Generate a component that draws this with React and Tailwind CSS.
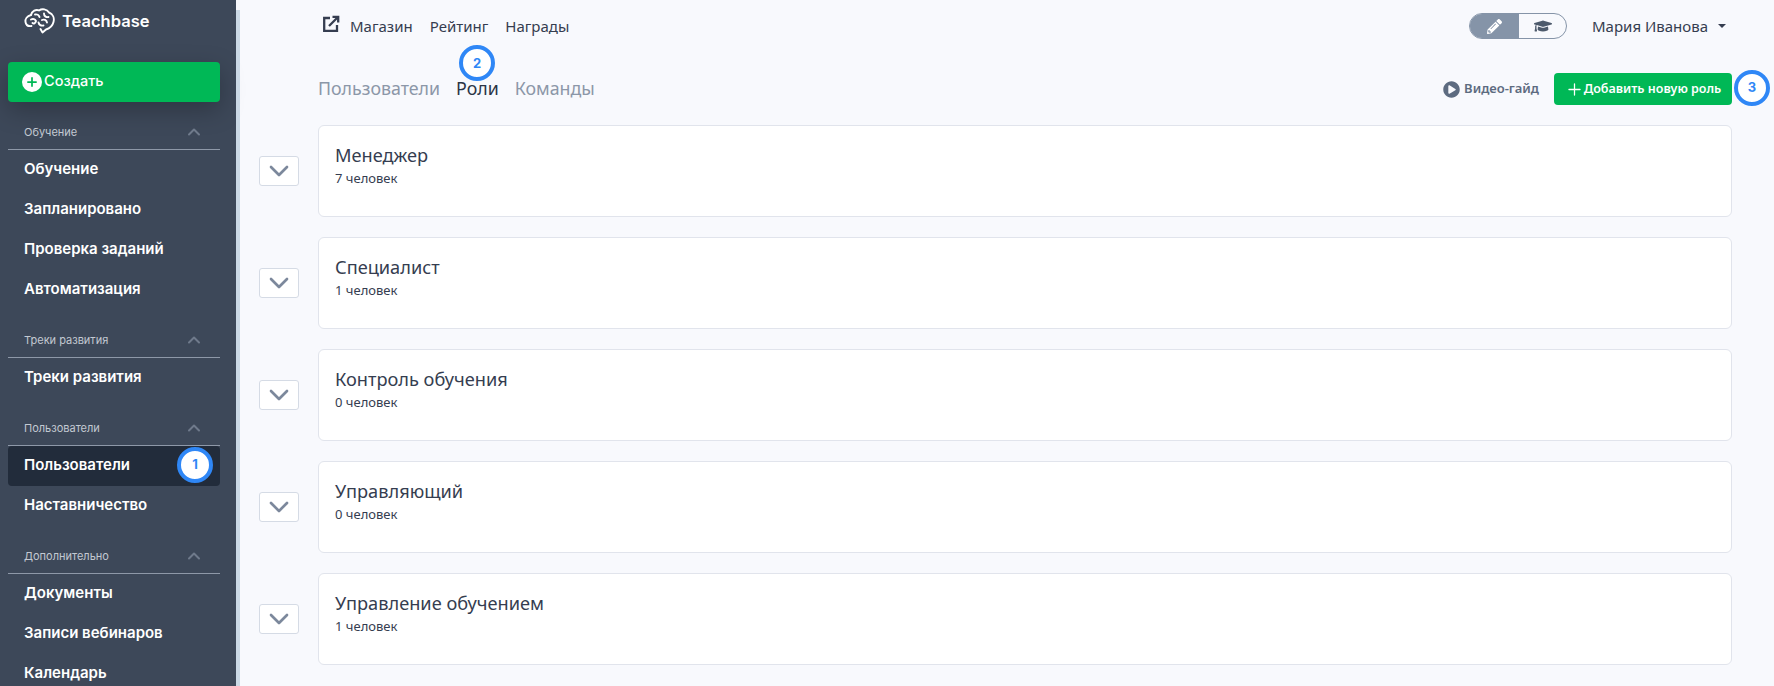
import { ChevronDown, ChevronUp, Plus } from "lucide-react";
import { FaGraduationCap, FaPencilAlt, FaPlayCircle } from "react-icons/fa";

const sections = [
  { title: "Обучение", items: ["Обучение", "Запланировано", "Проверка заданий", "Автоматизация"] },
  { title: "Треки развития", items: ["Треки развития"] },
  { title: "Пользователи", items: ["Пользователи", "Наставничество"] },
  { title: "Дополнительно", items: ["Документы", "Записи вебинаров", "Календарь"] },
];

const roles = [
  { name: "Менеджер", count: "7 человек" },
  { name: "Специалист", count: "1 человек" },
  { name: "Контроль обучения", count: "0 человек" },
  { name: "Управляющий", count: "0 человек" },
  { name: "Управление обучением", count: "1 человек" },
];

function Badge({ n, className }) {
  return (
    <span
      className={`absolute flex h-9 w-9 items-center justify-center rounded-full border-4 border-[#2f87f6] bg-white font-['Inter',sans-serif] text-[13px] font-bold text-[#2f87f6] ${className}`}
    >
      {n}
    </span>
  );
}

function BrainLogo() {
  return (
    <svg width="31" height="26" viewBox="0 0 31 26" fill="none" stroke="white" strokeWidth="1.9" strokeLinecap="round" strokeLinejoin="round">
      <path d="M7 7C8 3 12 1 15 2.500C18 .5 23 1 25 4.500C29 6 30.500 10 29.500 14C28.500 18 25.500 20.500 22 21.500L18.500 24.500L16.500 21" />
      <path d="M7 7C3 8 1 11 1.500 14C2 17 4.500 18.500 7.500 18" />
      <path d="M11 6.500C13 6 15 7 15.500 9" />
      <path d="M20 5.500C20 8 22 9.500 24.500 9" />
      <path d="M7 11.500C9 10.500 11 11 12 13C11.500 15.500 9.500 16 8.500 15" />
      <path d="M18 12C20 11 22.500 12 23 14.500" />
      <path d="M14.500 14.500C15 17 17 18 19.500 17.500" />
    </svg>
  );
}

function ExternalIcon() {
  return (
    <svg width="18" height="18" viewBox="0 0 18 18" fill="none" stroke="#353d50" strokeWidth="2.3" className="mr-[10px] -translate-y-[2px]">
      <path d="M8 3H2.200V15.800H15V10" />
      <path d="M7 11L16 2" />
      <path d="M10.500 1.800H16.200V7.500" />
    </svg>
  );
}

function Sidebar() {
  return (
    <aside className="flex h-full w-[236px] shrink-0 flex-col bg-[#3d4859] pl-2 pr-4 font-['Inter',sans-serif]">
      <div className="flex h-[62px] shrink-0 items-start pl-4 pt-2">
        <BrainLogo />
        <span className="ml-[7px] mt-[1px] text-[16.5px] font-semibold leading-6 text-white">Teachbase</span>
      </div>
      <button className="flex h-10 shrink-0 items-center rounded bg-[#00b856] pl-[14px] text-[14.5px] font-medium text-white shadow-[0_8px_24px_rgba(0,0,0,0.25)]">
        <span className="mr-[2px] flex h-5 w-5 items-center justify-center rounded-full bg-white">
          <Plus size={14} strokeWidth={3} className="text-[#00b856]" />
        </span>
        <span className="-translate-y-[1px]">Создать</span>
      </button>
      {sections.map((section) => (
        <div key={section.title} className="shrink-0">
          <div className="mt-[14px] flex h-[34px] items-start justify-between border-b border-[#8e98a8] pl-4 pr-[16px] pt-[6px]">
            <span className="text-[11px] leading-5 text-[#c3c9d2]">{section.title}</span>
            <ChevronUp size={20} strokeWidth={2.4} className="text-[#6f7a8b]" />
          </div>
          {section.items.map((item) => (
            <div
              key={item}
              className={`relative flex h-10 items-center rounded pb-[2px] pl-4 text-[15px] font-semibold text-white ${
                item === "Пользователи" ? "bg-[#222c3b]" : ""
              }`}
            >
              {item}
              {item === "Пользователи" && <Badge n="1" className="right-[7px] top-[1px]" />}
            </div>
          ))}
        </div>
      ))}
    </aside>
  );
}

function RoleRow({ role }) {
  return (
    <div className="flex items-center gap-[19px]">
      <button className="flex h-[30px] w-10 shrink-0 items-center justify-center rounded-[3px] border border-[#d5dbe5] bg-white">
        <ChevronDown size={32} strokeWidth={2} className="text-[#7c889c]" />
      </button>
      <div className="h-[92px] flex-1 rounded-md border border-[#e1e4ec] bg-white pl-4 pt-[15px] text-[#353d50]">
        <div className="text-[18.2px] leading-7">{role.name}</div>
        <div className="text-[13px] leading-[18px]">{role.count}</div>
      </div>
    </div>
  );
}

export default function App() {
  return (
    <div className="flex h-[686px] w-full overflow-hidden bg-[#f8f9fd] font-['Noto_Sans',sans-serif]">
      <Sidebar />
      <div className="mt-[10px] h-full w-1 shrink-0 bg-[#cbd9e6]" />
      <main className="flex min-w-0 flex-1 flex-col pl-[19px] pr-[42px]">
        <header className="flex h-[52px] shrink-0 items-center justify-between pl-[63px]">
          <nav className="flex items-center text-[15px] text-[#353d50]">
            <ExternalIcon />
            <a className="mr-[17px]">Магазин</a>
            <a className="mr-[17px]">Рейтинг</a>
            <a>Награды</a>
          </nav>
          <div className="flex items-center text-[15px] text-[#353d50]">
            <div className="flex h-[26px] w-[98px] overflow-hidden rounded-full border border-[#8594a8]">
              <span className="flex w-[49px] items-center justify-center bg-[#8594a8] text-white">
                <FaPencilAlt size={15} />
              </span>
              <span className="flex flex-1 items-center justify-center text-[#4d5a6c]">
                <FaGraduationCap size={18} />
              </span>
            </div>
            <span className="ml-[25px]">Мария Иванова</span>
            <span className="ml-[10px] mr-[6px] h-0 w-0 border-x-[4px] border-t-[4px] border-x-transparent border-t-[#353d50]" />
          </div>
        </header>
        <div className="relative flex h-[73px] shrink-0 items-start justify-between pl-[59px] pt-[21px]">
          <div className="flex items-center gap-4 text-[17.8px] leading-[30px] text-[#8c97a8]">
            <span>Пользователи</span>
            <span className="relative text-[#2b3446]">
              Роли
              <Badge n="2" className="left-[3px] -top-[28px]" />
            </span>
            <span>Команды</span>
          </div>
          <div className="flex items-center">
            <FaPlayCircle size={17} className="text-[#5d6b80]" />
            <span className="ml-[4px] text-[13px] font-semibold text-[#5d6b80]">Видео-гайд</span>
            <button className="relative ml-[15px] flex h-8 w-[178px] items-center justify-center rounded bg-[#00b856] text-[12.5px] font-semibold text-white">
              <Plus size={19} strokeWidth={1.6} />
              Добавить новую роль
              <Badge n="3" className="-right-[38px] -top-[3px]" />
            </button>
          </div>
        </div>
        <div className="flex flex-col gap-5">
          {roles.map((role) => (
            <RoleRow key={role.name} role={role} />
          ))}
        </div>
      </main>
    </div>
  );
}
